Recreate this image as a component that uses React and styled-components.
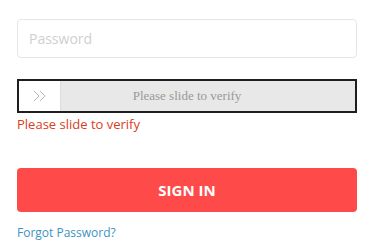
import React from 'react';
import styled, { createGlobalStyle } from 'styled-components';

const GlobalStyle = createGlobalStyle`
  html, body {
    margin: 0;
    padding: 0;
    background: #fff;
  }
  body {
    font-family: "Open Sans", "Liberation Sans", sans-serif;
  }
`;

const Form = styled.form`
  width: 340px;
  padding: 19px 0 0 17px;
  display: flex;
  flex-direction: column;
`;

const Input = styled.input`
  box-sizing: border-box;
  width: 100%;
  height: 39px;
  border: 1px solid #e6e6e6;
  border-radius: 4px;
  padding: 0 11px;
  font-family: "Open Sans", sans-serif;
  font-size: 14px;
  outline: none;

  &::placeholder {
    color: #cfcfcf;
  }
`;

const Slider = styled.div`
  position: relative;
  box-sizing: border-box;
  margin-top: 21px;
  height: 34px;
  border: 2px solid #1e1e1e;
  background: #e8e8e8;
  display: flex;
  align-items: center;
  justify-content: center;
`;

const Handle = styled.div`
  position: absolute;
  left: 0;
  top: 0;
  bottom: 0;
  width: 41px;
  background: #fff;
  border-right: 1px solid #dcdcdc;
  display: flex;
  align-items: center;
  justify-content: center;
`;

const SliderText = styled.span`
  font-family: "Liberation Serif", serif;
  font-size: 13px;
  color: #999;
`;

const Error = styled.div`
  margin-top: 1px;
  font-size: 13px;
  color: #d9401c;
  line-height: 20px;
`;

const Button = styled.button`
  margin-top: 34px;
  height: 44px;
  border: none;
  border-radius: 4px;
  background: #ff4a4a;
  color: #fff;
  font-family: "Open Sans", sans-serif;
  font-weight: 700;
  font-size: 15px;
  cursor: pointer;
`;

const Link = styled.a`
  margin-top: 12px;
  font-size: 12px;
  line-height: 18px;
  color: #3d93c1;
  text-decoration: none;
  align-self: flex-start;
`;

const App = () => {
  return (
    <>
      <GlobalStyle/>
      <Form onSubmit={ e => e.preventDefault() }>
        <Input type='password' placeholder='Password'/>
        <Slider>
          <SliderText>Please slide to verify</SliderText>
          <Handle>
            <svg width='14' height='12' viewBox='0 0 14 12' fill='none' stroke='#b5b5b5' strokeWidth='1'>
              <path d='M1 1l5 5-5 5M7 1l5 5-5 5'/>
            </svg>
          </Handle>
        </Slider>
        <Error>Please slide to verify</Error>
        <Button type='submit'>SIGN IN</Button>
        <Link href='#'>Forgot Password?</Link>
      </Form>
    </>
  );
};

export default App;
